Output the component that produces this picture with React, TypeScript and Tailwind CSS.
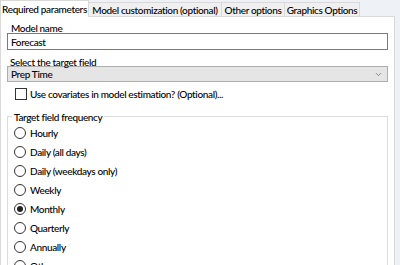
import { ChevronDown } from "lucide-react";

const tabs = [
  { label: "Model customization (optional)", w: "w-[133px]" },
  { label: "Other options", w: "w-[63px]" },
  { label: "Graphics Options", w: "w-[75px]" },
];

const freqs = [
  "Hourly",
  "Daily (all days)",
  "Daily (weekdays only)",
  "Weekly",
  "Monthly",
  "Quarterly",
  "Annually",
  "Other",
];

function Radio({ label, checked }: { label: string; checked?: boolean }) {
  return (
    <div className="flex items-center h-[19px] pl-[6px]">
      <span className="w-[12px] h-[12px] rounded-full border border-[#333] bg-white flex items-center justify-center">
        {checked && <span className="w-[6px] h-[6px] rounded-full bg-[#222]" />}
      </span>
      <span className="ml-[4px]">{label}</span>
    </div>
  );
}

export default function App() {
  return (
    <div
      className="w-[400px] h-[265px] overflow-hidden bg-[#eef1f6] text-[10px] font-medium tracking-[-0.35px] text-black leading-none whitespace-nowrap"
      style={{ fontFamily: 'Lato, "Segoe UI", sans-serif' }}
    >
      {/* TAB STRIP */}
      <div className="flex h-[17px] items-end">
        <div className="w-[89px] h-[17px] bg-white border border-b-0 border-[#d9d9d9] flex items-center justify-center">
          Required parameters
        </div>
        {tabs.map((t, i) => (
          <div
            key={i}
            className={`${t.w} h-[15px] bg-[#f0f0f0] border border-l-0 border-[#d9d9d9] flex items-center justify-center`}
          >
            {t.label}
          </div>
        ))}
        <div className="w-[35px] border-b border-[#d9d9d9]" />
      </div>
      {/* PANEL */}
      <div className="w-[395px] h-[248px] bg-white border-l border-r border-[#d9d9d9] px-[6px]">
        <div className="pt-[6px] pl-[4px] h-[16px]">Model name</div>
        <div className="h-[17px] border border-[#7a7a7a] flex items-center pl-[3px]">
          Forecast
        </div>
        <div className="mt-[7px] pl-[3px] h-[9px]">Select the target field</div>
        <div className="h-[16px] bg-[#e5e5e5] border border-[#adadad] flex items-center justify-between pl-[3px] pr-[4px]">
          <span>Prep Time</span>
          <ChevronDown size={9} strokeWidth={1.5} color="#444" />
        </div>
        <div className="mt-[6px] flex items-center h-[12px] pl-[8px]">
          <span className="w-[12px] h-[12px] border border-[#333] bg-white" />
          <span className="ml-[3px]">Use covariates in model estimation? (Optional)...</span>
        </div>
        {/* GROUP BOX */}
        <div className="relative mt-[16px] h-[200px] border border-[#dcdcdc] pt-[6px]">
          <span className="absolute -top-[5px] left-[4px] bg-white px-[2px]">
            Target field frequency
          </span>
          {freqs.map((f) => (
            <Radio key={f} label={f} checked={f === "Monthly"} />
          ))}
        </div>
      </div>
    </div>
  );
}
